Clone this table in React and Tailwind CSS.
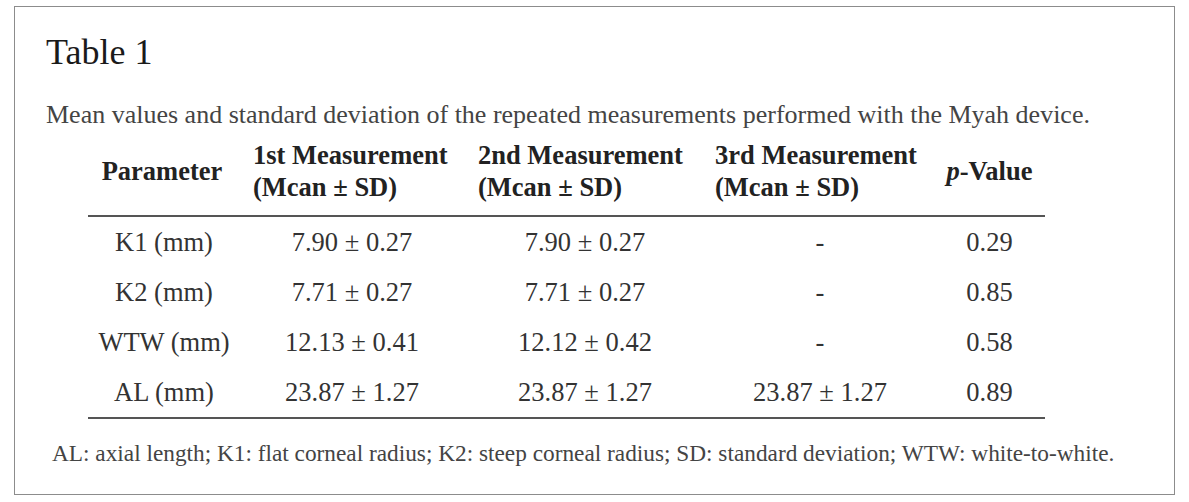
import React from 'react';

const rows = [
  { param: 'K1 (mm)', first: '7.90 ± 0.27', second: '7.90 ± 0.27', third: '-', p: '0.29' },
  { param: 'K2 (mm)', first: '7.71 ± 0.27', second: '7.71 ± 0.27', third: '-', p: '0.85' },
  { param: 'WTW (mm)', first: '12.13 ± 0.41', second: '12.12 ± 0.42', third: '-', p: '0.58' },
  { param: 'AL (mm)', first: '23.87 ± 1.27', second: '23.87 ± 1.27', third: '23.87 ± 1.27', p: '0.89' },
];

export default function App() {
  return (
    <div
      className="w-[1189px] h-[502px] bg-white pt-[6px] pl-[14px]"
      style={{ fontFamily: '"Liberation Serif", "Times New Roman", serif' }}
    >
      <div className="w-[1161px] h-[489px] border border-[#8c8c8c]">
        <h1 className="pl-[31px] pt-[25px] text-[36px] leading-[40px] text-[#1a1a1a]">Table 1</h1>
        <p className="pl-[31px] mt-[28px] text-[26px] leading-[30px] text-[#444]">
          Mean values and standard deviation of the repeated measurements performed with the Myah device.
        </p>
        <div className="pl-[73px] mt-[9px]">
          <table className="table-fixed w-[957px] border-collapse text-[#333]">
            <colgroup>
              <col className="w-[152px]" />
              <col className="w-[224px]" />
              <col className="w-[242px]" />
              <col className="w-[228px]" />
              <col />
            </colgroup>
            <thead>
              <tr className="border-b-2 border-[#555] text-[26.5px] leading-[32px] font-bold text-[#222]">
                <th className="text-center align-middle pb-[12px] pr-[4px]">Parameter</th>
                <th className="text-left pl-[13px] pb-[12px] whitespace-nowrap">
                  1st Measurement
                  <br />
                  (Mcan ± SD)
                </th>
                <th className="text-left pl-[14px] pb-[12px] whitespace-nowrap">
                  2nd Measurement
                  <br />
                  (Mcan ± SD)
                </th>
                <th className="text-left pl-[9px] pb-[12px] whitespace-nowrap">
                  3rd Measurement
                  <br />
                  (Mcan ± SD)
                </th>
                <th className="text-center align-middle pb-[12px]">
                  <i>p</i>-Value
                </th>
              </tr>
            </thead>
            <tbody className="text-[26.5px] leading-[50px]">
              {rows.map((r, i) => (
                <tr key={r.param} className={i === rows.length - 1 ? 'border-b-2 border-[#555]' : ''}>
                  <td className="text-center">{r.param}</td>
                  <td className="text-center">{r.first}</td>
                  <td className="text-center">{r.second}</td>
                  <td className="text-center">{r.third}</td>
                  <td className="text-center">{r.p}</td>
                </tr>
              ))}
            </tbody>
          </table>
        </div>
        <p className="pl-[37px] mt-[20px] text-[23.3px] leading-[28px] text-[#444]">
          AL: axial length; K1: flat corneal radius; K2: steep corneal radius; SD: standard deviation; WTW: white-to-white.
        </p>
      </div>
    </div>
  );
}
